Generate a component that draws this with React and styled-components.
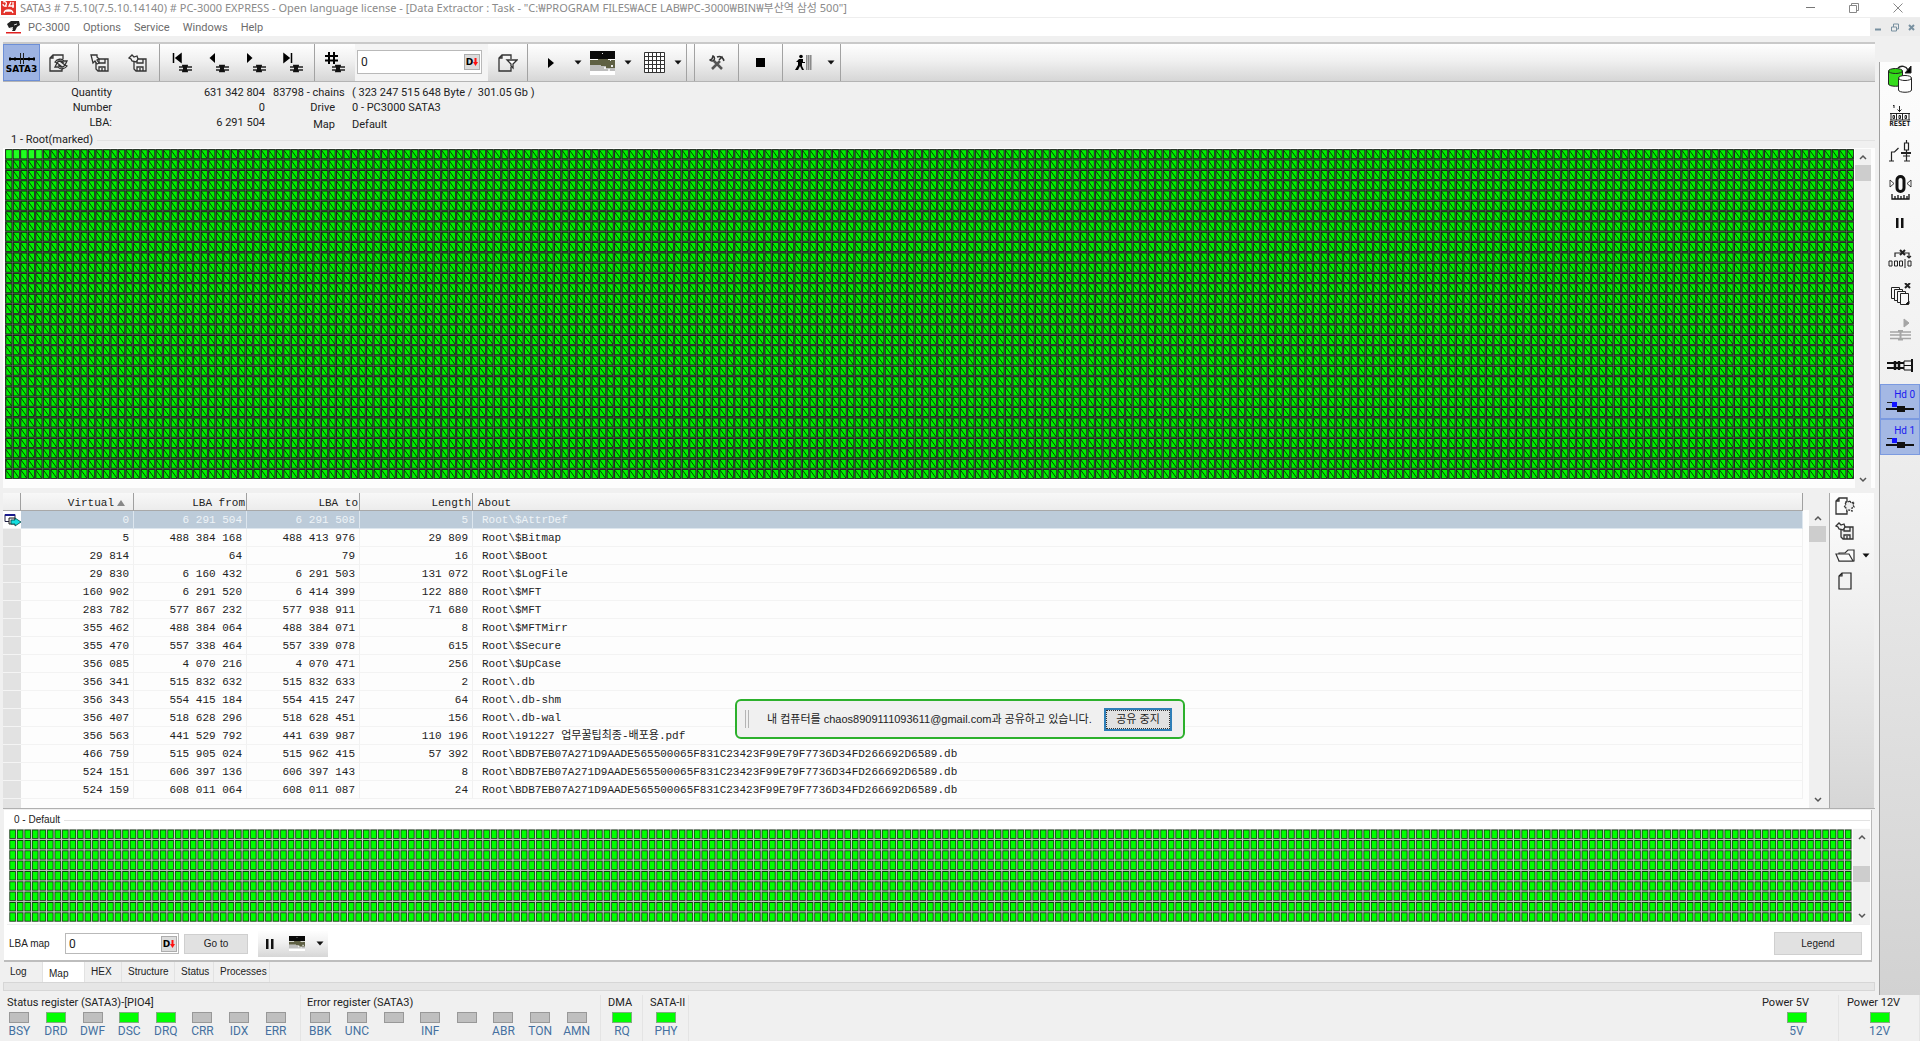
import React from "react";
import styled, { createGlobalStyle, css } from "styled-components";

const UI = 'Roboto, "Noto Sans CJK KR", sans-serif';
const CAPTION = '"Noto Sans", "Noto Sans CJK KR", sans-serif';
const PANEL = '"Liberation Sans", "Noto Sans CJK KR", sans-serif';
const MONO = '"Liberation Mono", "Noto Sans CJK KR", monospace';

const Global = createGlobalStyle`
  * { box-sizing: border-box; }
  body { margin: 0; background: #f0f0f0; color: #222; font: 11px/16px ${UI}; }
  button, input { font: inherit; color: inherit; }
  button { padding: 0; border: 0; background: none; }
  svg { display: block; flex: none; }
`;

/* ---------- window frame ---------- */
const Window = styled.div`
  display: flex;
  flex-direction: column;
  min-height: 100vh;
`;
const TitleBar = styled.header`
  display: flex;
  align-items: center;
  height: 18px;
  padding: 0 0 2px 1px;
  background: #fff;
  border-bottom: 1px solid #eee;
  color: #8a8a8a;
`;
const Title = styled.h1`
  flex: 1;
  margin: 0 0 0 4px;
  font: 400 11px/16px ${CAPTION};
  white-space: nowrap;
`;
const FrameButton = styled.button`
  display: grid;
  place-items: center;
  width: 44px;
  height: 15px;
`;
const MenuBar = styled.nav`
  display: flex;
  align-items: center;
  height: 18px;
  padding-left: 6px;
  background: #fff;
`;
const MenuItem = styled.button`
  margin-left: 7px;
  margin-right: 6px;
  padding-top: 2px;
  color: #6c6c6c;
`;
const MdiButtons = styled.div`
  display: flex;
  margin-left: auto;
  width: 50px;
  height: 18px;
  background: #ececec;
`;
const MdiButton = styled.button`
  flex: 1;
  display: grid;
  place-items: center;
`;
const Body = styled.div`
  display: flex;
  flex: 1;
`;
const Main = styled.main`
  flex: 1;
  min-width: 0;
  display: flex;
  flex-direction: column;
  padding: 6px 0 4px 3px;
`;

/* ---------- toolbar ---------- */
const barFill = css`background: linear-gradient(#fefefe, #f0f0f0 45%, #d6d6d6);`;
const Toolbar = styled.div`
  ${barFill}
  display: flex;
  height: 40px;
  border-top: 2px solid #c9c9c9;
  border-bottom: 1px solid #b4b4b4;
`;
const ToolGroup = styled.div`
  display: flex;
  padding: 0 ${(p) => p.$pad || 0}px;
  min-width: ${(p) => p.$min || 0}px;
  border-right: ${(p) => (p.$open ? 0 : 1)}px solid #a2a2a2;
`;
const ToolButton = styled.button`
  display: flex;
  flex-direction: column;
  align-items: center;
  justify-content: center;
  width: ${(p) => p.$w || 38}px;
  ${(p) => p.$on && css`
    background: #9db3e2;
    border: 1px solid #6d8fd6;
  `}
`;
const PortName = styled.span`
  font: 700 9px/9px "DejaVu Sans", sans-serif;
  color: #000;
`;
const FieldBox = styled.div`
  width: 133px;
  padding: 6px 6px 6px 2px;
  background: #f4f4f4;
`;
const Field = styled.label`
  display: flex;
  align-items: center;
  width: ${(p) => p.$w};
  height: ${(p) => p.$h}px;
  padding: 1px;
  background: #fff;
  border: 1px solid #b9b9b9;
  font: 12px/16px ${UI};
`;
const FieldInput = styled.input`
  flex: 1;
  min-width: 0;
  height: 100%;
  padding: 0 2px;
  border: 0;
  outline: 0;
  background: none;
`;
const BaseButton = styled.button`
  display: flex;
  align-items: center;
  justify-content: center;
  width: 16px;
  height: 16px;
  background: #dcdcdc;
  border: 1px solid #adadad;
  font: 700 9px/12px "DejaVu Sans", sans-serif;
  color: #000;
`;

/* ---------- task summary ---------- */
const Summary = styled.section`
  display: flex;
  gap: 8px;
  height: 50px;
  padding-top: 3px;
`;
const Counters = styled.dl`
  display: grid;
  grid-template-columns: 109px 145px;
  column-gap: 8px;
  grid-auto-rows: 15px;
  margin: 0;
  text-align: right;
  dd { margin: 0; }
`;
const Details = styled.div`
  white-space: pre;
  dl {
    display: grid;
    grid-template-columns: 62px auto;
    column-gap: 17px;
    grid-auto-rows: 17px;
    margin: 0;
  }
  dt { text-align: right; }
  dd { margin: 0; }
`;
const Chains = styled.div`
  display: grid;
  grid-template-columns: 71px auto;
  column-gap: 8px;
  line-height: 15px;
`;

/* ---------- block maps ---------- */
const GroupTitle = styled.h2`
  display: flex;
  align-items: center;
  gap: 4px;
  margin: 0;
  padding-left: 8px;
  font-size: 11px;
  font-weight: 400;
  line-height: 16px;
  &::after {
    content: "";
    flex: 1;
    height: 1px;
    background: #e2e2e2;
  }
`;
const MapFrame = styled.div`
  display: flex;
  align-items: stretch;
  gap: 1px;
  height: ${(p) => p.$h}px;
  padding: 1px ${(p) => p.$right}px 0 2px;
  background: #fdfdfd;
`;
const MapArt = styled.svg`
  flex: 1;
  width: 0;
  height: ${(p) => p.$h}px;
`;
const ScrollTrack = styled.div`
  display: flex;
  flex-direction: column;
  width: ${(p) => p.$w || 16}px;
  background: #f0f0f0;
`;
const ScrollButton = styled.button`
  display: grid;
  place-items: center;
  height: 16px;
  margin-top: ${(p) => (p.$end ? "auto" : 0)};
`;
const ScrollThumb = styled.div`
  height: 16px;
  margin-top: ${(p) => p.$top || 0}px;
  background: #cdcdcd;
`;

/* ---------- chain table ---------- */
const ChainArea = styled.section`
  flex: 1;
  display: flex;
  margin-top: 5px;
  border-bottom: 1px solid #b0b0b0;
`;
const TableWrap = styled.div`
  flex: 1;
  display: flex;
  flex-direction: column;
  background: #fdfdfd;
  &::after {
    content: "";
    flex: 1;
    width: 18px;
    background: #e2e2e2;
  }
`;
const Table = styled.table`
  width: 100%;
  table-layout: fixed;
  border-collapse: separate;
  border-spacing: 0;
  font: 11px/14px ${MONO};
`;
const Col = styled.col`
  width: ${(p) => (p.$w ? p.$w + "px" : "auto")};
`;
const Head = styled.th`
  height: 18px;
  padding: 2px 1px 0 5px;
  font-weight: 400;
  text-align: ${(p) => p.$align || "right"};
  background: linear-gradient(#f8f8f8, #ececec);
  border-right: 1px solid #a0a0a0;
  border-bottom: 1px solid #a8a8a8;
  white-space: nowrap;
  svg { display: inline-block; margin: 0 7px 0 3px; }
`;
const Cell = styled.td`
  height: 18px;
  padding: ${(p) => (p.$left ? "0 0 0 9px" : "0 4px 0 0")};
  text-align: ${(p) => (p.$left ? "left" : "right")};
  white-space: pre;
  border-right: 1px solid #f1f1f1;
  border-bottom: 1px solid #f3f3f3;
`;
const Marker = styled.td`
  padding: 0 0 0 1px;
  background: #e2e2e2;
  border-bottom: 1px solid #f4f4f4;
`;
const Row = styled.tr`
  ${(p) => p.$on && css`
    ${Cell} { background: #bccbd9; color: #eef3f7; border-color: #dde6ee; }
    ${Marker} { background: #fff; }
  `}
`;
const TableScroll = styled.div`
  display: flex;
  width: 23px;
  padding: 17px 0 0 6px;
  background: linear-gradient(#f0f0f0 17px, #fdfdfd 17px);
`;
const SideTools = styled.div`
  width: 45px;
  margin: 0 1px 0 3px;
  background: linear-gradient(#fdfdfd, #f0f0f0 35%, #d6d6d6);
  border-left: 1px solid #a8a8a8;
`;
const SideToolRow = styled.div`
  display: flex;
  height: 25px;
  padding-left: 2px;
`;

/* ---------- lower map panel ---------- */
const LowerPanel = styled.section`
  margin: 1px 3px 0 1px;
  padding: 2px 1px 0 3px;
  background: #fff;
  border-right: 1px solid #b9b9b9;
  border-bottom: 2px solid #bdbdbd;
  font: 10px/16px ${PANEL};
`;
const LowerTitle = styled(GroupTitle)`
  padding-left: 7px;
  font-size: 10px;
`;
const LowerControls = styled.div`
  display: flex;
  align-items: center;
  height: 36px;
  padding: 2px 8px 0 2px;
  border-top: 1px solid #eee;
`;
const ControlLabel = styled.label`
  width: 56px;
`;
const PushButton = styled.button`
  width: ${(p) => p.$w}px;
  height: ${(p) => p.$h}px;
  margin-left: ${(p) => (p.$end ? "auto" : "5px")};
  background: #e1e1e1;
  border: 1px solid #cfcfcf;
`;
const MiniBar = styled.div`
  ${barFill}
  display: flex;
  align-items: stretch;
  height: 26px;
  margin-left: 10px;
`;
const Tabs = styled.div`
  display: flex;
  height: 20px;
  padding: 0 0 0 1px;
  font: 10px/18px ${PANEL};
`;
const Tab = styled.button`
  width: ${(p) => p.$w}px;
  padding: ${(p) => (p.$on ? 3 : 0)}px 0 0 6px;
  text-align: left;
  white-space: nowrap;
  border-right: 1px solid #e2e2e2;
  ${(p) => p.$on && css`background: #fff;`}
`;
const Strip = styled.div`
  height: 9px;
  background: #e6e6e6;
  border: 1px solid #d6d6d6;
`;

/* ---------- right sidebar ---------- */
const Sidebar = styled.aside`
  width: 41px;
  margin: 26px 0 0 4px;
  background: linear-gradient(#fdfdfd, #f0f0f0 35%, #d2d2d2);
  border-left: 1px solid #a0a0a0;
`;
const SidebarButtons = styled.div`
  display: grid;
  grid-template-rows: repeat(11, 1fr);
  height: 393px;
`;
const SideButton = styled.button`
  display: flex;
  flex-direction: column;
  align-items: center;
  justify-content: center;
  ${(p) => p.$on && css`
    background: #a4b8e4;
    border: 1px solid #7b9ae0;
  `}
`;
const ResetText = styled.span`
  font: 700 7px/7px "DejaVu Sans Mono", monospace;
  color: #111;
`;
const HdText = styled.span`
  align-self: flex-end;
  padding-right: 4px;
  font: 10px/12px ${UI};
  color: #1a1af0;
`;

/* ---------- status registers ---------- */
const StatusBar = styled.footer`
  display: flex;
  height: 46px;
`;
const Register = styled.section`
  width: ${(p) => p.$w}px;
  margin-left: ${(p) => (p.$end ? "auto" : 0)};
  padding: 0 ${(p) => p.$pad || 0}px 0 1px;
  border-right: 1px solid #e4e4e4;
  h2 {
    margin: 0;
    padding-left: ${(p) => p.$indent}px;
    font-size: 11px;
    font-weight: 400;
    line-height: 16px;
    white-space: nowrap;
  }
`;
const Lamps = styled.ul`
  display: grid;
  grid-auto-flow: column;
  grid-auto-columns: 1fr;
  margin: 0;
  padding: 1px 0 0;
  list-style: none;
  li {
    display: flex;
    flex-direction: column;
    align-items: center;
    color: #4570a0;
    font-size: 12px;
    line-height: 16px;
  }
`;
const Lamp = styled.span`
  width: 20px;
  height: 11px;
  background: ${(p) => (p.$lit ? "#00ff00" : "#bfbfbf")};
  border: 1px solid ${(p) => (p.$lit ? "#7fae7f" : "#989898")};
`;

/* ---------- sharing notice ---------- */
const ShareNotice = styled.div`
  position: fixed;
  top: 699px;
  left: 50%;
  transform: translateX(-50%);
  display: flex;
  align-items: center;
  width: 450px;
  height: 40px;
  padding: 0 11px 0 8px;
  background: #f0f0f0;
  border: 2px solid #2cb02c;
  border-radius: 6px;
  font: 11px/16px ${PANEL};
  p { margin: 0 0 0 18px; flex: 1; white-space: nowrap; }
`;
const Grip = styled.span`
  width: 4px;
  height: 18px;
  border: solid #b4b4b4;
  border-width: 0 1px;
`;
const StopButton = styled.button`
  width: 68px;
  height: 23px;
  background: #e1e1e1;
  border: 2px solid #2f7fb8;
  outline: 1px dotted #333;
  outline-offset: -3px;
`;

/* ---------- drawings ---------- */
const Caret = () => (
  <svg width="8" height="5" viewBox="0 0 8 5"><path d="M0.5 0.5h7L4 4.5z" fill="#111" /></svg>
);
const Chevron = ({ down }) => (
  <svg width="8" height="6" viewBox="0 0 8 6" fill="none" stroke="#555" strokeWidth="1.5">
    <path d={down ? "M1 1l3 3 3-3" : "M1 5l3-3 3 3"} />
  </svg>
);
const SataIcon = () => (
  <svg width="26" height="13" viewBox="0 0 26 13" fill="none" stroke="#000">
    <path d="M0 7h26" strokeWidth="2" /><path d="M1 5v4M6 5v4M20 5v4M25 5v4" />
    <path d="M11.500 1v11M14.500 1v11" stroke="#222" />
  </svg>
);
const DocRefreshIcon = () => (
  <svg width="20" height="18" viewBox="0 0 20 18" fill="none" stroke="#333" strokeWidth="1.300">
    <path d="M14 5V1H4L1 4v13h12v-2M4 1v3H1" />
    <path d="M6 8c2-3 7-4 9-1h3l-2 4-4-3h2c-2-2-5-1-6 1zM18 12c-2 3-7 4-9 1H6l2-4 4 3h-2c2 2 5 1 6-1z" fill="#f2f2f2" />
  </svg>
);
const Floppy = ({ x = 0, y = 0 }) => (
  <g transform={`translate(${x} ${y})`}>
    <path d="M1 1h12v12H3l-2-2z" fill="#eee" /><path d="M4 1v4h6V1M4 13V9h6v4M7 10v3" />
  </g>
);
const SaveIcon = ({ hand }) => (
  <svg width="20" height="18" viewBox="0 0 20 18" fill="none" stroke="#333" strokeWidth="1.300">
    <Floppy x={5} y={4} />
    {hand
      ? <path d="M1 4l3-3 2 2 3-1 1 3-2 3-4-1-1-2z" fill="#f4f4f4" />
      : <path d="M1 1h6v2l2 2-2 1 2 3-2 1-2-3-2 2z" fill="#f4f4f4" />}
  </svg>
);
const NAV = {
  first: <path d="M1.500 1v10M9 2v8L4 6z" />,
  prev: <path d="M6 1v10L0.500 6z" />,
  next: <path d="M1 1v10l5.500-5z" />,
  last: <path d="M1 2v8l5-4zM8.500 1v10" />,
  hash: <path d="M4 0v12M9 0v12M0 4h13M0 8.500h13" />,
};
const NavIcon = ({ kind }) => (
  <svg width="20" height="21" viewBox="0 0 20 21">
    <g fill="#000" stroke="#000" strokeWidth={kind === "hash" ? 2 : kind === "first" || kind === "last" ? 1.5 : 0}>{NAV[kind]}</g>
    <path d="M7 15h13M7 18h13M10 13.500h6M10 19.500h6" stroke="#222" strokeWidth="1.300" />
    <path d="M11 13h4v7h-4z" fill="#111" />
  </svg>
);
const FilterDocIcon = () => (
  <svg width="20" height="18" viewBox="0 0 20 18" fill="none" stroke="#333" strokeWidth="1.300">
    <path d="M13 5V1H4L1 4v13h12v-4M4 1v3H1" /><path d="M9 6h10l-4 4v4l-2-2v-2z" fill="#fff" />
  </svg>
);
const PlayIcon = () => (<svg width="6" height="10" viewBox="0 0 6 10"><path d="M0 0v10l6-5z" /></svg>);
const PictureIcon = ({ w = 25, h = 24 }) => (
  <svg width={w} height={h} viewBox="0 0 25 24" preserveAspectRatio="none">
    <path d="M0 0h25v24H0z" fill="#fff" /><path d="M0 0h25v8H0z" fill="#0a0a0a" />
    <path d="M0 9h8V8h10v1h7v8H16v-2h-5v-1H0z" fill="#5f6044" />
    <path d="M0 14h11v1h5v2h9v3H0z" fill="#bdbdbd" />
    <path d="M12 2h1v1h-1zM20 9h1v1h-1zM21 14h2v2h-2zM14 16h2v2h-2zM18 18h2v2h-2z" fill="#eee" />
  </svg>
);
const GridIcon = () => (
  <svg width="21" height="21" viewBox="0 0 21 21" stroke="#333" fill="#fff">
    <path d="M0.500 0.500h20v20h-20zM4.500 0v21M8.500 0v21M12.500 0v21M16.500 0v21M0 4.500h21M0 8.500h21M0 12.500h21M0 16.500h21" />
  </svg>
);
const ToolsIcon = () => (
  <svg width="16" height="16" viewBox="0 0 16 16" fill="none" stroke="#333">
    <path d="M5 6l8 8M11 6l-8 8" strokeWidth="2.500" stroke="#555" />
    <path d="M4 1c2 1 2 4 0 5-1 0-2 0-3-1l2-1zM8 2c3-1.500 5-0.500 7 3M10 5l3-3 2 4" strokeWidth="1.500" />
  </svg>
);
const StopIcon = () => (<svg width="9" height="9" viewBox="0 0 9 9"><path d="M0 0h9v9H0z" /></svg>);
const ExitIcon = () => (
  <svg width="18" height="18" viewBox="0 0 18 18">
    <circle cx="6" cy="2.500" r="1.800" />
    <path d="M4 5h4v3h2v1H7v3l2 4H7l-2-4-2 4H0l3-5V8H1z" />
    <path d="M11 1h6v15h-6z" fill="#8a8a8a" /><path d="M12.500 1v15M14.500 1v15M16.500 1v15" stroke="#c4c4c4" strokeWidth="0.800" />
  </svg>
);
const RedArrow = () => (
  <svg width="5" height="8" viewBox="0 0 5 8"><path d="M1.500 0h2v4H5L2.500 8 0 4h1.500z" fill="#ff1010" /></svg>
);
const PauseIcon = () => (<svg width="8" height="10" viewBox="0 0 8 10"><path d="M0 0h2.500v10H0zM5 0h2.500v10H5z" fill="#111" /></svg>);
const DrivesIcon = () => (
  <svg width="26" height="29" viewBox="0 0 26 29" stroke="#222">
    <path d="M1.500 6v13c0 3 14 3 14 0V6" fill="#35dc1c" /><ellipse cx="8.500" cy="6" rx="7" ry="2.500" fill="#2bd010" />
    <path d="M11.500 13v12c0 3 13 3 13 0V13" fill="#fff" /><ellipse cx="18" cy="13" rx="6.500" ry="2.500" fill="#fff" />
    <path d="M11 3c3-3 8-2 10 2" fill="none" strokeWidth="1.500" /><path d="M24 1v7h-6z" fill="#000" />
  </svg>
);
const ResetIcon = () => (
  <svg width="20" height="17" viewBox="0 0 20 17" fill="none" stroke="#222">
    <path d="M4 1v3M3 1.500h1M9.500 2v6M7.500 5.500l2 2 2-2M0 9.500h20M0 16h20M1 9v7M6.500 9v7M12.500 9v7M19 9v7M3 11.500h1.500v3H3zM9 11.500h1.500v3H9zM15 11.500h1.500v3H15z" />
  </svg>
);
const SwitchIcon = () => (
  <svg width="22" height="22" viewBox="0 0 22 22" fill="none" stroke="#222" strokeWidth="1.200">
    <path d="M0 21h5M2.500 21v-9h3l4-4M17.500 0v3M15.500 3h4v7h-4zM17.500 10v11M15 21h6M14 16h7" />
    <path d="M12 13h10" strokeWidth="2" />
  </svg>
);
const ZeroIcon = () => (
  <svg width="23" height="25" viewBox="0 0 23 25" fill="none" stroke="#111">
    <rect x="8" y="1.500" width="7" height="15" rx="3.500" strokeWidth="3" />
    <path d="M1 5v7l4-3.500zM22 5v7l-4-3.500z" strokeWidth="0.800" />
    <path d="M3 19v5h17v-5M6 21v3M9 20v4M12 21v3M15 20v4M18 21v3" strokeWidth="1.300" />
  </svg>
);
const ChainCutIcon = () => (
  <svg width="24" height="19" viewBox="0 0 24 19" fill="none" stroke="#222">
    <path d="M7 8V4h14v5M19 7l2 2 2-2" strokeWidth="1.200" /><path d="M12 1l5 5M17 1l-5 5" strokeWidth="2" />
    <path d="M1 12h3v5H1zM6.500 12h3v5h-3zM11.500 12h3v5h-3zM17 10v9M20 12h3v5h-3z" />
  </svg>
);
const CopiesIcon = () => (
  <svg width="21" height="22" viewBox="0 0 21 22" fill="#f8f8f8" stroke="#222">
    <path d="M1.500 4.500h8v11h-8z" /><path d="M4.500 6.500h8v11h-8z" /><path d="M7.500 8.500h8v11h-8z" /><path d="M10.500 10.500h8v11h-8z" />
    <path d="M15 0l5 5M20 0l-5 5" strokeWidth="2" /><path d="M19 18v3h-3z" fill="#000" />
  </svg>
);
const DisabledNavIcon = () => (
  <svg width="21" height="23" viewBox="0 0 21 23" fill="none" stroke="#a5a5a5">
    <path d="M14 1v8l5-4z" fill="#a5a5a5" /><path d="M0 14h21M0 17h21M0 20.500h21" strokeWidth="1.500" />
    <path d="M8 13h5M10.500 13v9M8 21.500h5" strokeWidth="2" />
  </svg>
);
const PlugIcon = () => (
  <svg width="26" height="13" viewBox="0 0 26 13" fill="none" stroke="#111">
    <path d="M0 4h17M0 9h17" strokeWidth="2" /><path d="M8 2v9M12 2v9" strokeWidth="2.500" /><path d="M17 2h8M17 6.500h8M17 11h8M17 2v9" />
    <path d="M25 0v13" strokeWidth="2" />
  </svg>
);
const HdIcon = () => (
  <svg width="28" height="13" viewBox="0 0 28 13">
    <path d="M1 1h6v1H1z" fill="#222" /><path d="M6 1h5v5H6z" fill="#1212ff" />
    <path d="M0 7h28v2H0z" fill="#111" /><path d="M11 5h8v6h-8z" fill="#111" />
  </svg>
);
const DocStarIcon = () => (
  <svg width="20" height="18" viewBox="0 0 20 18" fill="none" stroke="#333" strokeWidth="1.300">
    <path d="M12 5V1H4L1 4v13h11v-3M4 1v3H1" />
    <path d="M15 4l1 2 3-1-1 3 1 2-2 1v3l-3-1-2 1-1-3-2-1 2-2-1-3h3z" fill="#eee" strokeDasharray="2 1" />
  </svg>
);
const FolderIcon = () => (
  <svg width="20" height="13" viewBox="0 0 20 13" fill="#fafafa" stroke="#333" strokeWidth="1.200">
    <path d="M4 12V4h6l3-3h6v11z" /><path d="M1 5h13l4 7H4z" />
  </svg>
);
const PageIcon = () => (
  <svg width="14" height="18" viewBox="0 0 14 18" fill="none" stroke="#222" strokeWidth="1.200">
    <path d="M4 1h9v16H1V4zM4 1v3H1" />
  </svg>
);
const RowMarkerIcon = () => (
  <svg width="17" height="14" viewBox="0 0 17 14">
    <path d="M1 1.500h10v7H1z" fill="#fff" stroke="#224" /><path d="M1 1h10v2H1z" fill="#1a1a8c" />
    <path d="M5 5h6v6H5z" fill="#ddd" stroke="#222" /><path d="M7 7h4V5l6 4-6 4v-2H7z" fill="#13dfe0" stroke="#044" strokeWidth="0.800" />
  </svg>
);
const AppIcon = () => (
  <svg width="15" height="14" viewBox="0 0 15 14">
    <path d="M0 0h15v14H0z" fill="#e2342c" />
    <path d="M2 1c3-1 4 1 3 3s-3 1-3-1M5 3v3M10 1L8 5h5M12 1v6M3 12c1-4 8-4 9 0M5 10h5" stroke="#fff" strokeWidth="1.300" fill="none" />
  </svg>
);
const MenuLogo = () => (
  <svg width="15" height="14" viewBox="0 0 15 14">
    <path d="M1 4l4-3h8l1 4-3 2-2 4H6l1-4-4 1z" fill="#222" /><path d="M8 5l3-1M4 8l3 2" stroke="#ddd" />
    <path d="M0 12h15v1.500H0z" fill="#e02020" />
  </svg>
);

/* Block maps are drawn in half-size units: every block is 15 by 20. */
const CW = 15;
const CH = 20;
const gridLines = (cols, rows) => {
  let d = "";
  for (let c = 0; c <= cols; c++) d += `M${c * CW} 0V${rows * CH}`;
  for (let r = 0; r <= rows; r++) d += `M0 ${r * CH}H${cols * CW}`;
  return d;
};
const blockPath = (cols, rows, x, y, w, h) => {
  let d = "";
  for (let r = 0; r < rows; r++)
    for (let c = 0; c < cols; c++) d += `M${c * CW + x} ${r * CH + y}h${w}v${h}h${-w}z`;
  return d;
};
const slashPath = (cols, rows, skip) => {
  let d = "";
  for (let r = 0; r < rows; r++)
    for (let c = r === 0 ? skip : 0; c < cols; c++) d += `M${c * CW + 2} ${r * CH + 3}l11 15`;
  return d;
};
const ChainMap = ({ cols, rows, height, plain }) => (
  <MapArt $h={height} viewBox={`0 0 ${cols * CW} ${rows * CH}`} preserveAspectRatio="none" role="img" aria-label="Chain map">
    <rect width={cols * CW} height={rows * CH} fill="#102410" />
    <path d={gridLines(cols, rows)} stroke="#7a7a7a" strokeWidth="1" />
    <path d={blockPath(cols, rows, 2.5, 2.5, 10.5, 15.5)} fill="#00f000" />
    <path d={blockPath(plain, 1, 2.5, 2.5, 10.5, 15.5)} fill="#20ff20" />
    <path d={slashPath(cols, rows, plain)} stroke="#043004" strokeWidth="1.800" />
  </MapArt>
);
const SectorMap = ({ cols, rows, height }) => (
  <MapArt $h={height} viewBox={`0 0 ${cols * CW} ${rows * CH}`} preserveAspectRatio="none" role="img" aria-label="Sector map">
    <rect width={cols * CW} height={rows * CH} fill="#888" />
    <path d={gridLines(cols, rows)} stroke="#c8c8c8" strokeWidth="2" />
    <path d={blockPath(cols, rows, 1, 1.5, 12.5, 17.5)} fill="#0a4a0a" />
    <path d={blockPath(cols, rows, 2.5, 3, 9.5, 14.5)} fill="#00ff00" />
  </MapArt>
);

/* ---------- data ---------- */
const HASH = "Root\\BDB7EB07A271D9AADE565500065F831C23423F99E79F7736D34FD266692D6589.db";
const CHAINS = [
  ["0", "6 291 504", "6 291 508", "5", "Root\\$AttrDef"],
  ["5", "488 384 168", "488 413 976", "29 809", "Root\\$Bitmap"],
  ["29 814", "64", "79", "16", "Root\\$Boot"],
  ["29 830", "6 160 432", "6 291 503", "131 072", "Root\\$LogFile"],
  ["160 902", "6 291 520", "6 414 399", "122 880", "Root\\$MFT"],
  ["283 782", "577 867 232", "577 938 911", "71 680", "Root\\$MFT"],
  ["355 462", "488 384 064", "488 384 071", "8", "Root\\$MFTMirr"],
  ["355 470", "557 338 464", "557 339 078", "615", "Root\\$Secure"],
  ["356 085", "4 070 216", "4 070 471", "256", "Root\\$UpCase"],
  ["356 341", "515 832 632", "515 832 633", "2", "Root\\.db"],
  ["356 343", "554 415 184", "554 415 247", "64", "Root\\.db-shm"],
  ["356 407", "518 628 296", "518 628 451", "156", "Root\\.db-wal"],
  ["356 563", "441 529 792", "441 639 987", "110 196", "Root\\191227 업무꿀팁최종-배포용.pdf"],
  ["466 759", "515 905 024", "515 962 415", "57 392", HASH],
  ["524 151", "606 397 136", "606 397 143", "8", HASH],
  ["524 159", "608 011 064", "608 011 087", "24", HASH],
];
const REGISTERS = [
  { title: "Status register (SATA3)-[PIO4]", w: 301, pad: 6, indent: 6, lamps: [["BSY"], ["DRD", 1], ["DWF"], ["DSC", 1], ["DRQ", 1], ["CRR"], ["IDX"], ["ERR"]] },
  { title: "Error register (SATA3)", w: 300, pad: 5, indent: 5, lamps: [["BBK"], ["UNC"], [""], ["INF"], [""], ["ABR"], ["TON"], ["AMN"]] },
  { title: "DMA", w: 42, indent: 6, lamps: [["RQ", 1]] },
  { title: "SATA-II", w: 46, indent: 6, lamps: [["PHY", 1]] },
  { title: "Power 5V", w: 85, indent: 7, end: true, lamps: [["5V", 1]] },
  { title: "Power 12V", w: 81, indent: 7, lamps: [["12V", 1]] },
];
const SIDE = [
  ["Copy drive", <DrivesIcon />],
  ["Reset", <><ResetIcon /><ResetText>RESET</ResetText></>],
  ["Power switch", <SwitchIcon />],
  ["Recalibrate", <ZeroIcon />],
  ["Pause", <PauseIcon />],
  ["Break chain", <ChainCutIcon />],
  ["Close copies", <CopiesIcon />],
  ["Next port", <DisabledNavIcon />],
  ["Connector", <PlugIcon />],
];

const Scroll = ({ w, top }) => (
  <ScrollTrack $w={w}>
    <ScrollButton aria-label="Scroll up"><Chevron /></ScrollButton>
    <ScrollThumb $top={top} />
    <ScrollButton $end aria-label="Scroll down"><Chevron down /></ScrollButton>
  </ScrollTrack>
);
const NumberField = ({ id, w, h, label }) => (
  <Field $w={w} $h={h}>
    <FieldInput id={id} defaultValue="0" aria-label={label} />
    <BaseButton aria-label="Decimal">D<RedArrow /></BaseButton>
  </Field>
);
const Tool = ({ label, w, on, children }) => (
  <ToolButton $w={w} $on={on} aria-label={label}>{children}</ToolButton>
);

export default function App() {
  return (
    <Window>
      <Global />
      <TitleBar>
        <AppIcon />
        <Title>SATA3 # 7.5.10(7.5.10.14140) # PC-3000 EXPRESS - Open language license - [Data Extractor : Task - "C:₩PROGRAM FILES₩ACE LAB₩PC-3000₩BIN₩부산역 삼성 500"]</Title>
        <FrameButton aria-label="Minimize"><svg width="9" height="9"><path d="M0 4.500h9" stroke="#777" /></svg></FrameButton>
        <FrameButton aria-label="Restore"><svg width="10" height="10" fill="none" stroke="#888"><path d="M0.500 2.500h7v7h-7zM2.500 2.500v-2h7v7h-2" /></svg></FrameButton>
        <FrameButton aria-label="Close"><svg width="10" height="10" stroke="#888"><path d="M0.500 0.500l9 9M9.500 0.500l-9 9" /></svg></FrameButton>
      </TitleBar>
      <MenuBar>
        <MenuLogo />
        {["PC-3000", "Options", "Service", "Windows", "Help"].map((m) => <MenuItem key={m}>{m}</MenuItem>)}
        <MdiButtons>
          <MdiButton aria-label="Minimize task"><svg width="7" height="8"><path d="M0 6.500h6" stroke="#7890a0" strokeWidth="2" /></svg></MdiButton>
          <MdiButton aria-label="Restore task"><svg width="8" height="9" fill="none" stroke="#7890a0"><path d="M0.500 4h5v4h-5zM2.500 4V1h5v5h-2" /></svg></MdiButton>
          <MdiButton aria-label="Close task"><svg width="7" height="7" stroke="#7890a0" strokeWidth="2"><path d="M1 1l5 5M6 1L1 6" /></svg></MdiButton>
        </MdiButtons>
      </MenuBar>
      <Body>
        <Main>
          <Toolbar>
            <ToolGroup>
              <Tool label="SATA3 port" w={37} on><SataIcon /><PortName>SATA3</PortName></Tool>
              <Tool label="Reload task"><DocRefreshIcon /></Tool>
            </ToolGroup>
            <ToolGroup $pad={2}>
              <Tool label="Save"><SaveIcon /></Tool>
              <Tool label="Save as"><SaveIcon hand /></Tool>
            </ToolGroup>
            <ToolGroup $pad={3}>
              {["first", "prev", "next", "last"].map((k) => <Tool key={k} label={k} w={37}><NavIcon kind={k} /></Tool>)}
            </ToolGroup>
            <ToolGroup $open><Tool label="Go to number" w={40}><NavIcon kind="hash" /></Tool></ToolGroup>
            <FieldBox><NumberField w="125px" h={24} label="Chain number" /></FieldBox>
            <ToolGroup $pad={1}><Tool label="Filter" w={37}><FilterDocIcon /></Tool></ToolGroup>
            <ToolGroup $pad={2}>
              <Tool label="Run" w={42}><PlayIcon /></Tool><Tool label="Run options" w={12}><Caret /></Tool>
              <Tool label="Map view" w={36}><PictureIcon /></Tool><Tool label="Map view options" w={16}><Caret /></Tool>
              <Tool label="Grid" w={36}><GridIcon /></Tool><Tool label="Grid options" w={12}><Caret /></Tool>
            </ToolGroup>
            <ToolGroup $min={8} />
            <ToolGroup $pad={2}><Tool label="Settings" w={39}><ToolsIcon /></Tool></ToolGroup>
            <ToolGroup $pad={2}><Tool label="Stop" w={39}><StopIcon /></Tool></ToolGroup>
            <ToolGroup $pad={2}><Tool label="Exit"><ExitIcon /></Tool><Tool label="Exit options" w={15}><Caret /></Tool></ToolGroup>
          </Toolbar>

          <Summary>
            <Counters>
              <dt>Quantity</dt><dd>631 342 804</dd>
              <dt>Number</dt><dd>0</dd>
              <dt>LBA:</dt><dd>6 291 504</dd>
            </Counters>
            <Details>
              <Chains><span>83798 - chains</span><span>( 323 247 515 648 Byte /  301.05 Gb )</span></Chains>
              <dl><dt>Drive</dt><dd>0 - PC3000 SATA3</dd><dt>Map</dt><dd>Default</dd></dl>
            </Details>
          </Summary>

          <GroupTitle>1 - Root(marked)</GroupTitle>
          <MapFrame $h={340} $right={4}>
            <ChainMap cols={246} rows={32} height={330} plain={5} />
            <Scroll />
          </MapFrame>

          <ChainArea>
            <TableWrap>
              <Table>
                <colgroup><Col $w={18} /><Col $w={113} /><Col $w={113} /><Col $w={113} /><Col $w={113} /><Col /></colgroup>
                <thead>
                  <tr>
                    <Head aria-label="Current" />
                    <Head>Virtual<svg width="8" height="6" viewBox="0 0 8 6"><path d="M4 0l4 6H0z" fill="#888" /></svg></Head>
                    <Head>LBA from</Head><Head>LBA to</Head><Head>Length</Head><Head $align="left">About</Head>
                  </tr>
                </thead>
                <tbody>
                  {CHAINS.map((r, i) => (
                    <Row key={i} $on={i === 0}>
                      <Marker>{i === 0 && <RowMarkerIcon />}</Marker>
                      {r.map((v, j) => <Cell key={j} $left={j === 4}>{v}</Cell>)}
                    </Row>
                  ))}
                </tbody>
              </Table>
            </TableWrap>
            <TableScroll><Scroll w={17} /></TableScroll>
            <SideTools>
              <SideToolRow><Tool label="New item" w={26}><DocStarIcon /></Tool></SideToolRow>
              <SideToolRow><Tool label="Save table" w={26}><SaveIcon hand /></Tool></SideToolRow>
              <SideToolRow><Tool label="Open table" w={26}><FolderIcon /></Tool><Tool label="Open options" w={17}><Caret /></Tool></SideToolRow>
              <SideToolRow><Tool label="Clear table" w={26}><PageIcon /></Tool></SideToolRow>
            </SideTools>
          </ChainArea>

          <LowerPanel>
            <LowerTitle>0 - Default</LowerTitle>
            <MapFrame $h={96} $right={0}>
              <SectorMap cols={245} rows={9} height={93} />
              <Scroll w={17} top={21} />
            </MapFrame>
            <LowerControls>
              <ControlLabel htmlFor="lba">LBA map</ControlLabel>
              <NumberField id="lba" w="114px" h={21} label="LBA map" />
              <PushButton $w={64} $h={20}>Go to</PushButton>
              <MiniBar>
                <Tool label="Pause map" w={23}><PauseIcon /></Tool>
                <Tool label="Map picture" w={31}><PictureIcon w={16} h={15} /></Tool>
                <Tool label="Picture options" w={16}><Caret /></Tool>
              </MiniBar>
              <PushButton $w={88} $h={23} $end>Legend</PushButton>
            </LowerControls>
          </LowerPanel>
          <Tabs>
            {[["Log", 39], ["Map", 42], ["HEX", 37], ["Structure", 53], ["Status", 39], ["Processes", 56]].map(([t, w]) => (
              <Tab key={t} $w={w} $on={t === "Map"}>{t}</Tab>
            ))}
          </Tabs>
          <Strip />
        </Main>
        <Sidebar>
          <SidebarButtons>
            {SIDE.map(([label, icon]) => <SideButton key={label} aria-label={label}>{icon}</SideButton>)}
            {["Hd 0", "Hd 1"].map((h) => <SideButton key={h} $on><HdText>{h}</HdText><HdIcon /></SideButton>)}
          </SidebarButtons>
        </Sidebar>
      </Body>
      <StatusBar>
        {REGISTERS.map((r) => (
          <Register key={r.title} $w={r.w} $pad={r.pad} $indent={r.indent} $end={r.end}>
            <h2>{r.title}</h2>
            <Lamps>
              {r.lamps.map(([name, lit], i) => <li key={i}><Lamp $lit={lit} />{name}</li>)}
            </Lamps>
          </Register>
        ))}
      </StatusBar>
      <ShareNotice>
        <Grip />
        <p>내 컴퓨터를 chaos8909111093611@gmail.com과 공유하고 있습니다.</p>
        <StopButton>공유 중지</StopButton>
      </ShareNotice>
    </Window>
  );
}
